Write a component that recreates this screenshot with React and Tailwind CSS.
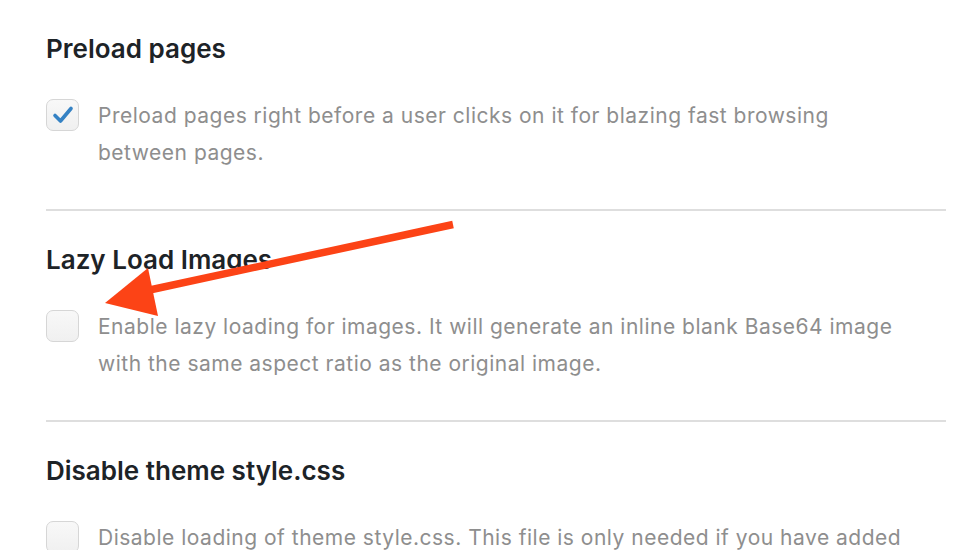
import React from "react";

const FONT = { fontFamily: 'Inter, "Noto Sans", "Liberation Sans", sans-serif' };

function Box({ checked }) {
  return (
    <div className="mt-[2px] w-[33px] h-[32px] shrink-0 rounded-[7px] border border-[#d6d6d6] bg-gradient-to-b from-[#f8f8f8] to-[#f0f0f0] flex items-center justify-center">
      {checked && (
        <svg width="22" height="20" viewBox="0 0 22 20">
          <path d="M3 10.5 L8.5 16 L19 3.5" fill="none" stroke="#3582c4" strokeWidth="3.6" strokeLinecap="round" strokeLinejoin="round" />
        </svg>
      )}
    </div>
  );
}

function Section({ title, checked, lines, last }) {
  return (
    <div className={last ? "pt-[33px]" : "pt-[33px] pb-[38px] border-b-2 border-[#dedede]"}>
      <h2 className="text-[26px] leading-[32px] font-semibold text-[#1d2327]">{title}</h2>
      <div className="mt-[32px] flex items-start gap-[19px]">
        <Box checked={checked} />
        <p className="text-[21px] leading-[37px] text-[#8e8e8e] tracking-[0.5px]">
          {lines.map((l, i) => (
            <span key={i} className="block whitespace-nowrap">{l}</span>
          ))}
        </p>
      </div>
    </div>
  );
}

export default function App() {
  return (
    <div className="relative w-[978px] h-[550px] overflow-hidden bg-white" style={FONT}>
      <div className="ml-[46px] w-[900px]">
        <Section
          title="Preload pages"
          checked
          lines={["Preload pages right before a user clicks on it for blazing fast browsing", "between pages."]}
        />
        <Section
          title="Lazy Load Images"
          lines={["Enable lazy loading for images. It will generate an inline blank Base64 image", "with the same aspect ratio as the original image."]}
        />
        <Section
          title="Disable theme style.css"
          last
          lines={["Disable loading of theme style.css. This file is only needed if you have added", "custom CSS to it."]}
        />
      </div>
      <svg className="absolute inset-0 pointer-events-none" width="978" height="550" viewBox="0 0 978 550">
        <line x1="453" y1="224.5" x2="145" y2="291" stroke="#fc4316" strokeWidth="7.5" />
        <polygon points="105,303 148,268 158,316" fill="#fc4316" />
      </svg>
    </div>
  );
}
